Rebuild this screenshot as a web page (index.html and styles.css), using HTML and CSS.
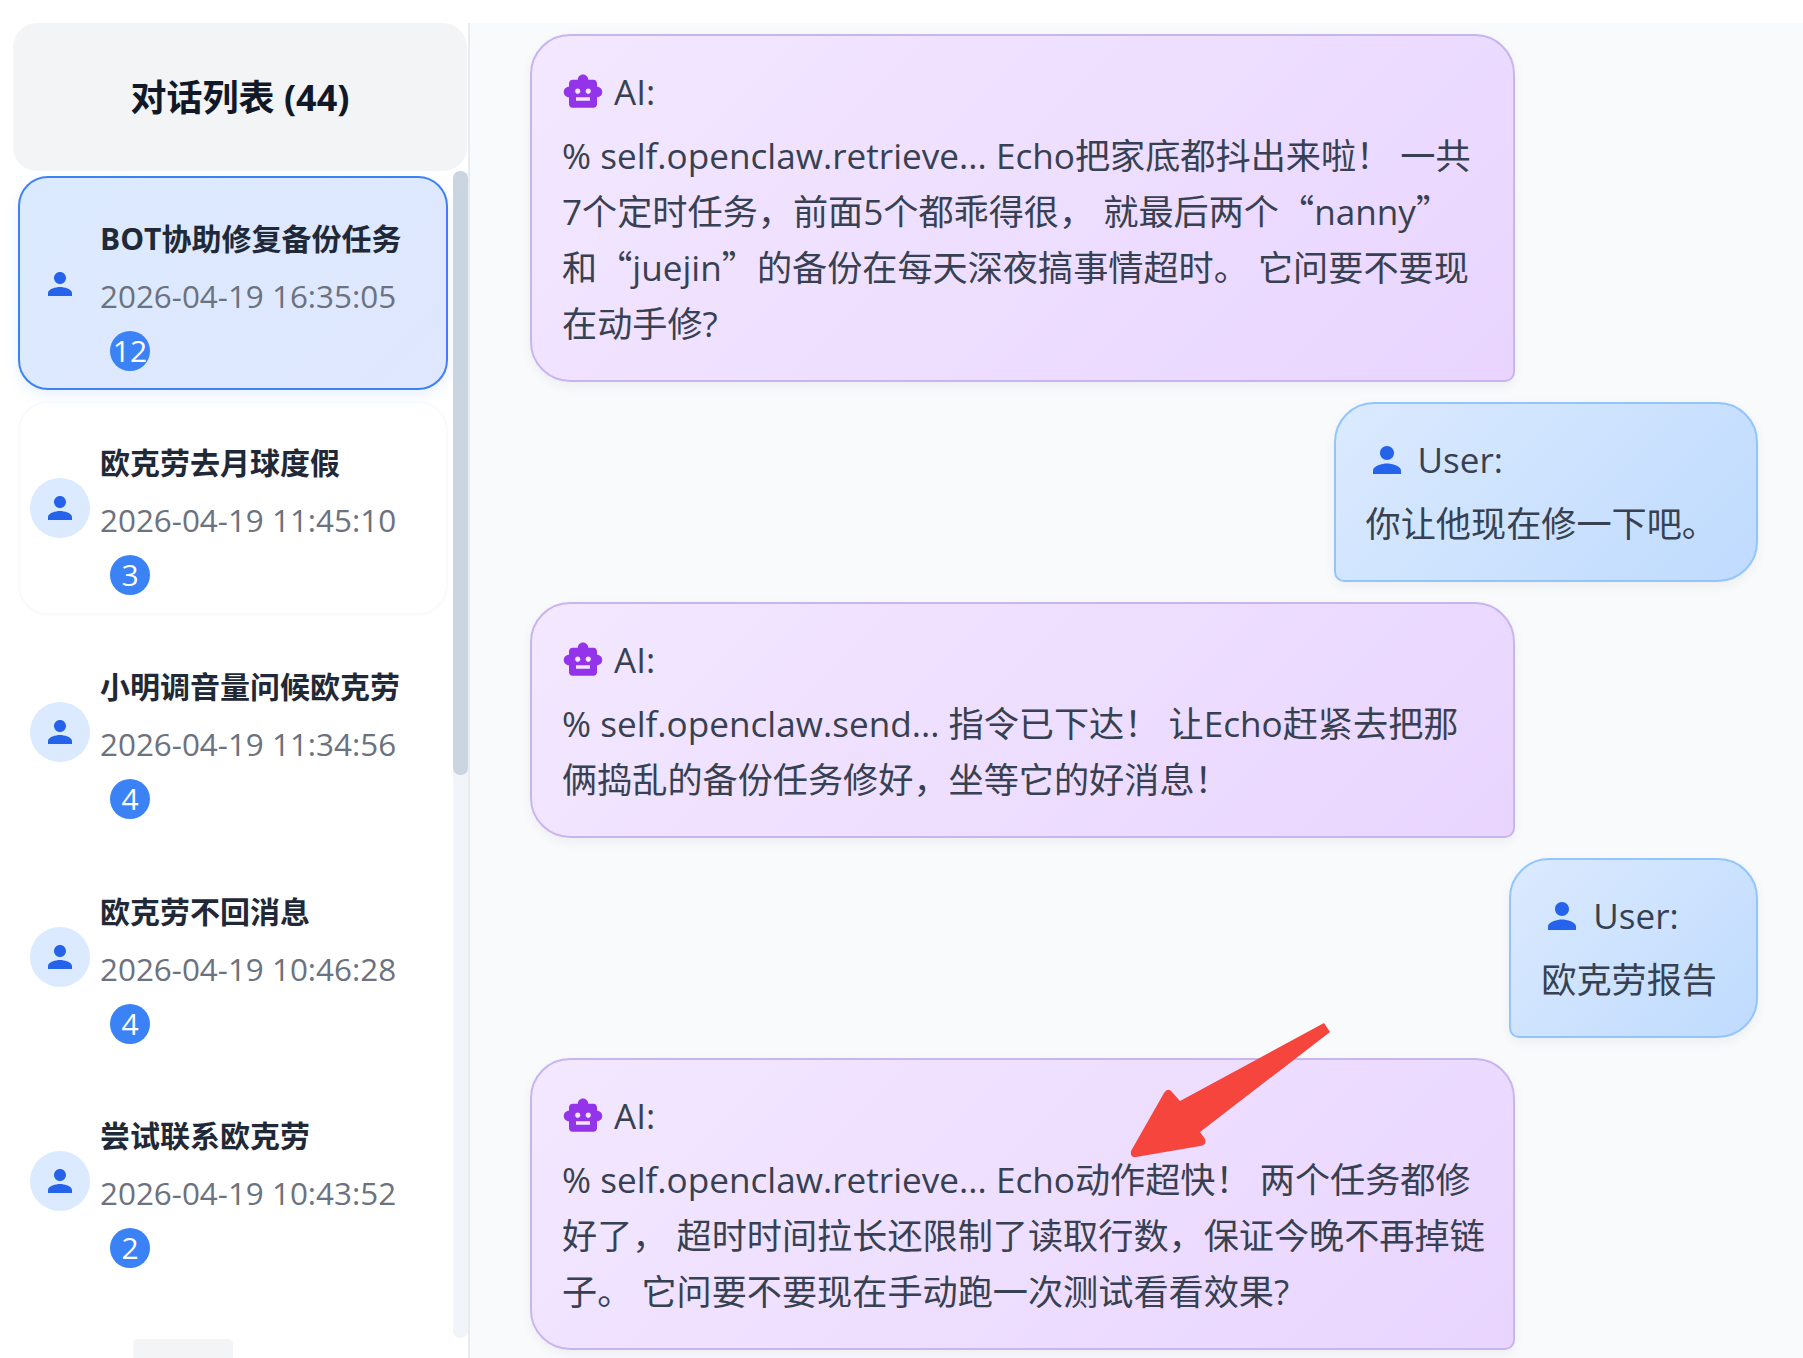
FILE: index.html
```html
<!DOCTYPE html>
<html lang="zh-CN">
<head>
<meta charset="utf-8">
<title>对话列表</title>
<link rel="stylesheet" href="styles.css">
</head>
<body>
<svg width="0" height="0" class="defs">
  <symbol id="i-user" viewBox="0 0 24 24"><path d="M12 12c2.21 0 4-1.79 4-4s-1.79-4-4-4-4 1.79-4 4 1.79 4 4 4zm0 2c-2.67 0-8 1.34-8 4v2h16v-2c0-2.66-5.33-4-8-4z"/></symbol>
  <symbol id="i-bot" viewBox="0 0 24 24"><path d="M20 9V7c0-1.1-.9-2-2-2h-3c0-1.66-1.34-3-3-3S9 3.34 9 5H6c-1.1 0-2 .9-2 2v2c-1.66 0-3 1.34-3 3s1.34 3 3 3v4c0 1.1.9 2 2 2h12c1.1 0 2-.9 2-2v-4c1.66 0 3-1.34 3-3s-1.34-3-3-3zM7.5 11.5c0-.83.67-1.5 1.5-1.5s1.5.67 1.5 1.5S9.83 13 9 13s-1.5-.67-1.5-1.5zM16 17H8v-2h8v2zm-1-4c-.83 0-1.5-.67-1.5-1.5S14.17 10 15 10s1.5.67 1.5 1.5S15.83 13 15 13z"/></symbol>
</svg>
<div class="app">
  <aside class="sidebar">
    <h2 class="side-head">对话列表 (44)</h2>
    <div class="side-body">
      <ul class="list">
        <li class="item active">
          <span class="avatar"><svg class="ico-side"><use href="#i-user"/></svg></span>
          <div class="meta"><div class="title">BOT协助修复备份任务</div><div class="time">2026-04-19 16:35:05</div><span class="badge">12</span></div>
        </li>
        <li class="item soft">
          <span class="avatar"><svg class="ico-side"><use href="#i-user"/></svg></span>
          <div class="meta"><div class="title">欧克劳去月球度假</div><div class="time">2026-04-19 11:45:10</div><span class="badge">3</span></div>
        </li>
        <li class="item">
          <span class="avatar"><svg class="ico-side"><use href="#i-user"/></svg></span>
          <div class="meta"><div class="title">小明调音量问候欧克劳</div><div class="time">2026-04-19 11:34:56</div><span class="badge">4</span></div>
        </li>
        <li class="item">
          <span class="avatar"><svg class="ico-side"><use href="#i-user"/></svg></span>
          <div class="meta"><div class="title">欧克劳不回消息</div><div class="time">2026-04-19 10:46:28</div><span class="badge">4</span></div>
        </li>
        <li class="item">
          <span class="avatar"><svg class="ico-side"><use href="#i-user"/></svg></span>
          <div class="meta"><div class="title">尝试联系欧克劳</div><div class="time">2026-04-19 10:43:52</div><span class="badge">2</span></div>
        </li>
      </ul>
      <div class="track"><div class="thumb"></div></div>
    </div>
    <div class="pager"><span class="pager-btn"></span></div>
  </aside>
  <main class="chat">
    <article class="msg ai">
      <div class="who"><svg class="ico-bot"><use href="#i-bot"/></svg>AI:</div>
      <p class="text">% self.openclaw.retrieve... Echo把家底都抖出来啦！ 一共<br>7个定时任务，前面5个都乖得很， 就最后两个<span class="q">“</span>nanny<span class="q">”</span><br>和<span class="q">“</span>juejin<span class="q">”</span>的备份在每天深夜搞事情超时。 它问要不要现<br>在动手修?</p>
    </article>
    <article class="msg user">
      <div class="who"><svg class="ico-user"><use href="#i-user"/></svg>User:</div>
      <p class="text">你让他现在修一下吧。</p>
    </article>
    <article class="msg ai">
      <div class="who"><svg class="ico-bot"><use href="#i-bot"/></svg>AI:</div>
      <p class="text">% self.openclaw.send... 指令已下达！ 让Echo赶紧去把那<br>俩捣乱的备份任务修好，坐等它的好消息！</p>
    </article>
    <article class="msg user">
      <div class="who"><svg class="ico-user"><use href="#i-user"/></svg>User:</div>
      <p class="text">欧克劳报告</p>
    </article>
    <article class="msg ai">
      <div class="who"><svg class="ico-bot"><use href="#i-bot"/></svg>AI:</div>
      <p class="text">% self.openclaw.retrieve... Echo动作超快！ 两个任务都修<br>好了， 超时时间拉长还限制了读取行数，保证今晚不再掉链<br>子。 它问要不要现在手动跑一次测试看看效果?</p>
    </article>
  </main>
  <svg class="arrow" viewBox="0 0 210 140" width="210" height="140">
    <path d="M194 2 L200 11 L70 111 L75 118 Q77 124 70 125 L6 136 Q0 137 1 130 L34 72 Q38 66 42 71 L50 80 Z"/>
  </svg>
</div>
</body>
</html>
```
FILE: styles.css
```css
* { box-sizing: border-box; }
html, body { margin: 0; padding: 0; height: 100%; overflow: hidden; background: #fff; }
body { font-family: "Open Sans", "Noto Sans CJK SC", sans-serif; color: #374151; }
.defs { position: absolute; }
.app { position: relative; display: flex; margin-top: 23px; height: 1335px; overflow: hidden; }

.sidebar { width: 470px; flex: none; display: flex; flex-direction: column; background: #fff; border-right: 2px solid #e8ecf1; }
.side-head { margin: 0 1px 0 13px; height: 148px; flex: none; display: flex; align-items: center; justify-content: center; padding-bottom: 3px; background: #f3f4f6; border-radius: 24px; font-size: 36px; font-weight: 700; color: #111827; }
.side-body { display: flex; height: 1167px; flex: none; }
.list { list-style: none; margin: 0; padding: 5px 5px 0 18px; flex: 1; min-width: 0; }
.track { width: 15px; flex: none; background: #f1f5f9; border-radius: 7px; }
.thumb { height: 604px; background: #cbd5e1; border-radius: 7px; }
.pager { display: flex; padding: 1px 0 0 133px; }
.pager-btn { width: 100px; height: 40px; background: #f3f4f6; border-radius: 5px; }

.item { display: flex; align-items: flex-start; gap: 10px; height: 214px; margin-bottom: 10.5px; padding: 37px 10px 0 10px; border: 2px solid transparent; border-radius: 30px; }
.item.active { padding-top: 38px; background: linear-gradient(135deg, #dbeafe, #e0e7ff); border-color: #3b82f6; box-shadow: 0 6px 14px rgba(59, 130, 246, .1); }
.item.soft { border-color: #f8fafc; box-shadow: 0 1px 3px rgba(15, 23, 42, .02); }
.avatar { width: 60px; height: 60px; flex: none; margin-top: 38px; display: flex; align-items: center; justify-content: center; border-radius: 50%; background: #dbeafe; }
.item.active .avatar { background: transparent; }
.ico-side { width: 36px; height: 36px; fill: #2563eb; }
.meta { flex: 1; min-width: 0; }
.title { font-size: 30px; line-height: 45px; font-weight: 700; color: #1f2937; white-space: nowrap; }
.time { font-size: 31.4px; line-height: 45px; margin-top: 12px; color: #6b7280; white-space: nowrap; }
.badge { display: flex; align-items: center; justify-content: center; width: 40px; height: 40px; margin: 13px 0 0 10px; border-radius: 50%; background: #3b82f6; color: #fff; font-size: 30px; line-height: 1; }

.chat { flex: 1; min-width: 0; display: flex; flex-direction: column; gap: 20px; padding: 11px 45px 0 60px; background: #f8fafc; }
.msg { flex: none; padding: 28px 30px 29px; border-radius: 40px; box-shadow: 0 4px 12px rgba(15, 23, 42, .05); }
.ai { width: 985px; align-self: flex-start; background: linear-gradient(135deg, #f3e8ff, #e9d5ff); border: 2px solid #c9b5ee; border-bottom-right-radius: 10px; }
.user { align-self: flex-end; padding-right: 39px; background: linear-gradient(135deg, #dbeafe, #bfdbfe); border: 2px solid #93c5fd; border-bottom-left-radius: 10px; }
.who { display: flex; align-items: center; gap: 10px; font-size: 35px; line-height: 56px; }
.ico-bot, .ico-user { width: 42px; height: 42px; flex: none; }
.ico-bot { fill: #9333ea; }
.ico-user { fill: #2563eb; }
.text { margin: 7px 0 0; font-size: 35.15px; line-height: 56px; white-space: nowrap; }
.q { font-family: "Noto Sans CJK SC", sans-serif; line-height: 0; }
.arrow { position: absolute; left: 1130px; top: 998px; }
.arrow path { fill: #f6453d; }
```
